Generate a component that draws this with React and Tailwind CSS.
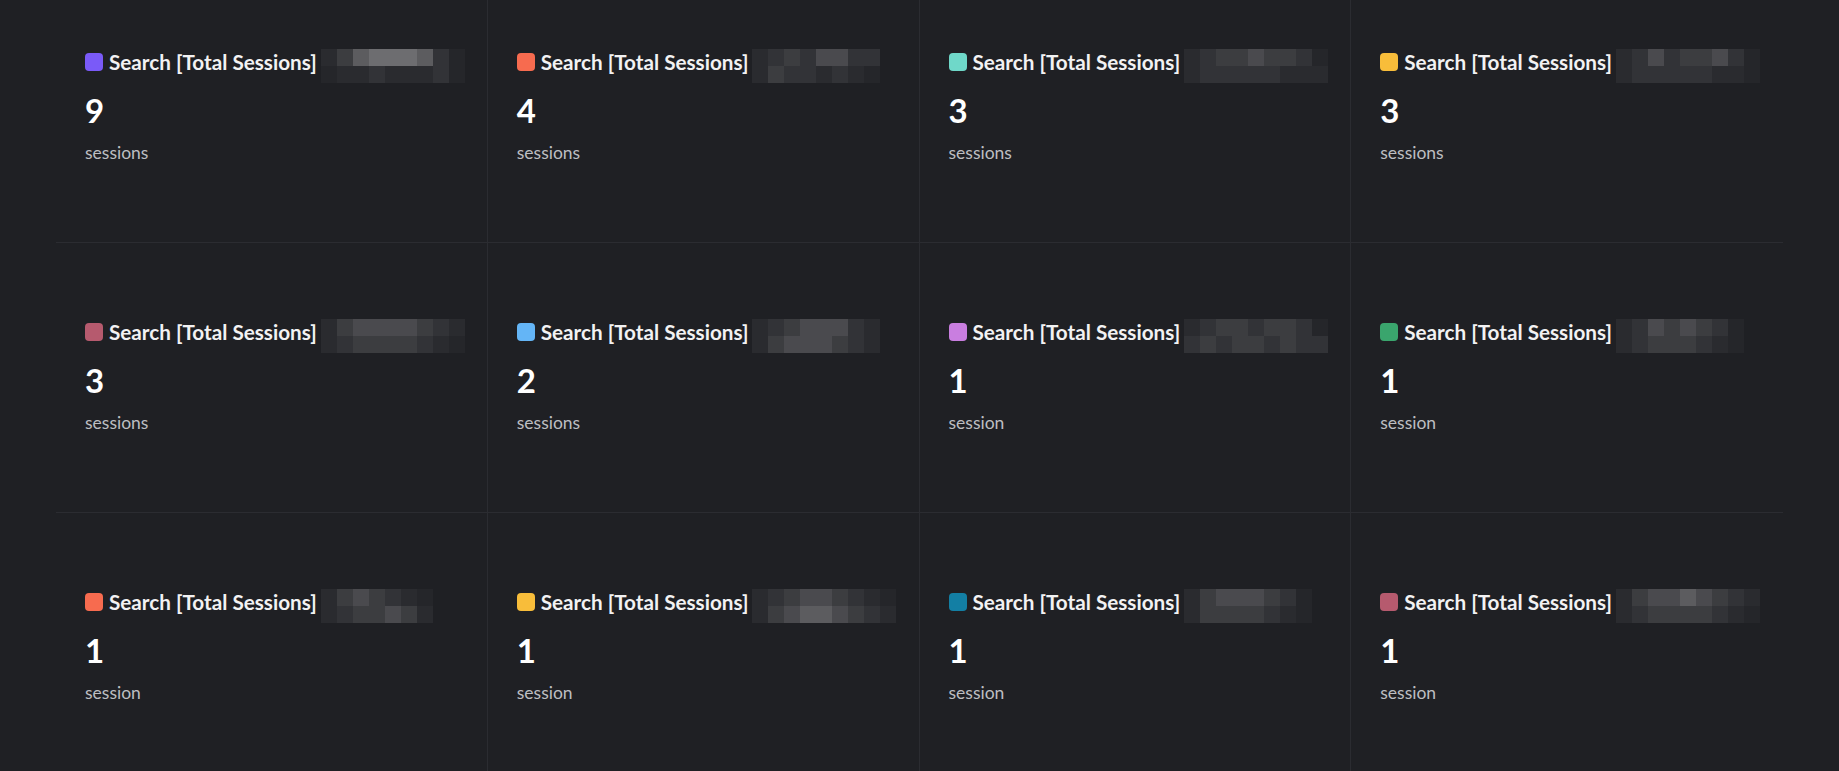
import React from 'react';

const palette = ['#212226', '#25262a', '#2a2b2f', '#323337', '#3c3d40', '#4a4a4e', '#5c5c5f', '#6d6d70'];

// redacted part of each title, drawn as two rows of pixel blocks
const cards = [
  { color: '#7a5af8', value: 9, unit: 'sessions', top: '246777631', bottom: '122322231' },
  { color: '#f76b4f', value: 4, unit: 'sessions', top: '23435533', bottom: '24332321' },
  { color: '#6fd8c9', value: 3, unit: 'sessions', top: '234454431', bottom: '233333222' },
  { color: '#f8bd3a', value: 3, unit: 'sessions', top: '235344531', bottom: '233333221' },
  { color: '#b65a6e', value: 3, unit: 'sessions', top: '245555432', bottom: '234444321' },
  { color: '#64b5f6', value: 2, unit: 'sessions', top: '23455532', bottom: '24555432' },
  { color: '#c97ee0', value: 1, unit: 'session', top: '234434431', bottom: '343443433' },
  { color: '#3aa56d', value: 1, unit: 'session', top: '23545431', bottom: '23444321' },
  { color: '#f76b4f', value: 1, unit: 'session', top: '2454321', bottom: '2344542' },
  { color: '#f8bd3a', value: 1, unit: 'session', top: '234554321', bottom: '245665432' },
  { color: '#137fa4', value: 1, unit: 'session', top: '24555431', bottom: '24444321' },
  { color: '#b65a6e', value: 1, unit: 'session', top: '245565432', bottom: '234444321' },
];

function Mosaic({ top, bottom }) {
  return (
    <div className="flex flex-col self-start -mt-[1px] ml-[4px]">
      {[top, bottom].map((row, r) => (
        <div key={r} className="flex">
          {row.split('').map((d, i) => (
            <div key={i} className="w-[16px] h-[17px]" style={{ backgroundColor: palette[Number(d)] }} />
          ))}
        </div>
      ))}
    </div>
  );
}

function Card({ card, last }) {
  return (
    <div className={`h-[270px] border-b border-[#2b2c31] pl-[29px] pt-[77px] ${last ? '' : 'border-r'}`}>
      <div className="flex items-center h-[24px]">
        <span className="w-[18px] h-[18px] rounded-[4px] shrink-0" style={{ backgroundColor: card.color }} />
        <span className="ml-[6px] text-[20.7px] font-bold text-[#f2f2f3] whitespace-nowrap leading-[24px]">
          Search [Total Sessions]
        </span>
        <Mosaic top={card.top} bottom={card.bottom} />
      </div>
      <div className="mt-[16px] text-[33px] font-bold leading-[40px] text-white">{card.value}</div>
      <div className="mt-[11px] text-[17.5px] leading-[24px] text-[#bdbec1]">{card.unit}</div>
    </div>
  );
}

export default function App() {
  return (
    <div className="h-[771px] overflow-hidden bg-[#1f2024] px-14" style={{ fontFamily: 'Lato, "Liberation Sans", sans-serif' }}>
      <div className="grid grid-cols-4 -mt-[27px]">
        {cards.map((card, i) => (
          <Card key={i} card={card} last={i % 4 === 3} />
        ))}
      </div>
    </div>
  );
}
